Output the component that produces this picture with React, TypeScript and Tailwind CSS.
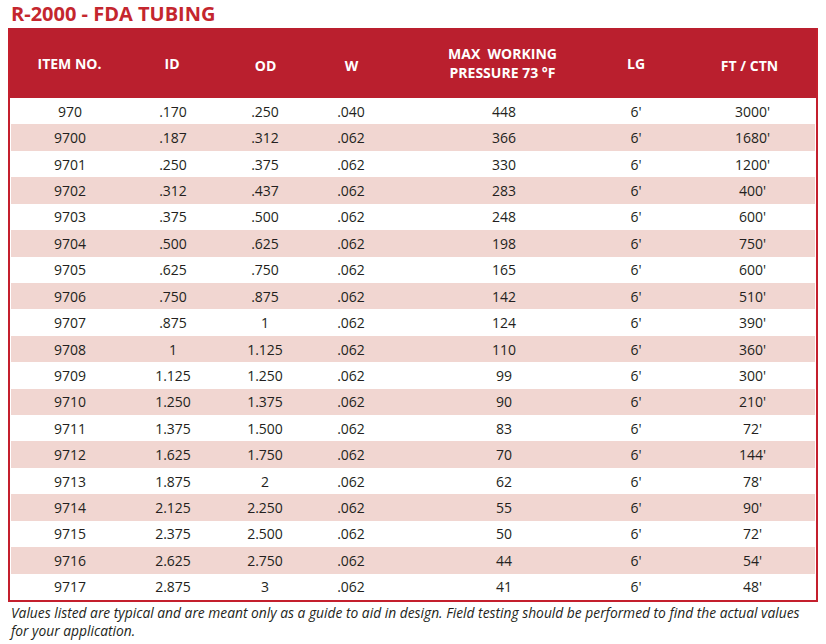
const rows: string[][] = [
  ["970", ".170", ".250", ".040", "448", "6'", "3000'"],
  ["9700", ".187", ".312", ".062", "366", "6'", "1680'"],
  ["9701", ".250", ".375", ".062", "330", "6'", "1200'"],
  ["9702", ".312", ".437", ".062", "283", "6'", "400'"],
  ["9703", ".375", ".500", ".062", "248", "6'", "600'"],
  ["9704", ".500", ".625", ".062", "198", "6'", "750'"],
  ["9705", ".625", ".750", ".062", "165", "6'", "600'"],
  ["9706", ".750", ".875", ".062", "142", "6'", "510'"],
  ["9707", ".875", "1", ".062", "124", "6'", "390'"],
  ["9708", "1", "1.125", ".062", "110", "6'", "360'"],
  ["9709", "1.125", "1.250", ".062", "99", "6'", "300'"],
  ["9710", "1.250", "1.375", ".062", "90", "6'", "210'"],
  ["9711", "1.375", "1.500", ".062", "83", "6'", "72'"],
  ["9712", "1.625", "1.750", ".062", "70", "6'", "144'"],
  ["9713", "1.875", "2", ".062", "62", "6'", "78'"],
  ["9714", "2.125", "2.250", ".062", "55", "6'", "90'"],
  ["9715", "2.375", "2.500", ".062", "50", "6'", "72'"],
  ["9716", "2.625", "2.750", ".062", "44", "6'", "54'"],
  ["9717", "2.875", "3", ".062", "41", "6'", "48'"],
];

const cols = "grid grid-cols-[115px_92px_94px_78px_228px_36px_161px]";

export default function App() {
  return (
    <div className="h-[644px] w-[826px] overflow-hidden bg-white font-['Open_Sans',sans-serif] text-[#231f20]">
      <h1 className="mt-[2px] pl-[11px] text-[20px] leading-[24px] font-bold text-[#c4262e]">
        R-2000 - FDA TUBING
      </h1>

      <div className="mt-[2px] ml-[8px] w-[810px] border-x-2 border-b-2 border-[#c41f2d]">
        <div className={`${cols} h-[70px] items-center bg-[#ba1f2e] px-[1px] text-center text-[14px] font-bold text-white`}>
          <div className="pl-[2px]">ITEM NO.</div>
          <div>ID</div>
          <div className="translate-y-[2px] pl-[1px]">OD</div>
          <div className="translate-y-[2px] pl-[1px]">W</div>
          <div className="pr-[3px] leading-[19px] whitespace-pre">
            {"MAX  WORKING\nPRESSURE 73 °F"}
          </div>
          <div>LG</div>
          <div className="translate-y-[2px] pl-[30px]">FT / CTN</div>
        </div>

        <div className="flex h-[502px] flex-col px-[1px]">
          {rows.map((row, index) => (
            <div
              key={row[0]}
              className={`${cols} flex-1 items-center text-center text-[14px] ${
                index % 2 === 1 ? "bg-[#f1d6d1]" : "bg-white"
              }`}
            >
              {row.map((cell, i) => (
                <div
                  key={i}
                  className={
                    i === 6 ? "pl-[36px]" : i === 0 ? "pl-[3px]" : i === 1 ? "pl-[2px]" : ""
                  }
                >
                  {cell}
                </div>
              ))}
            </div>
          ))}
        </div>
      </div>

      <p className="mt-[2px] pl-[11px] text-[13.8px] leading-[18px] whitespace-nowrap italic">
        Values listed are typical and are meant only as a guide to aid in design. Field
        testing should be performed to find the actual values
        <br />
        for your application.
      </p>
    </div>
  );
}
